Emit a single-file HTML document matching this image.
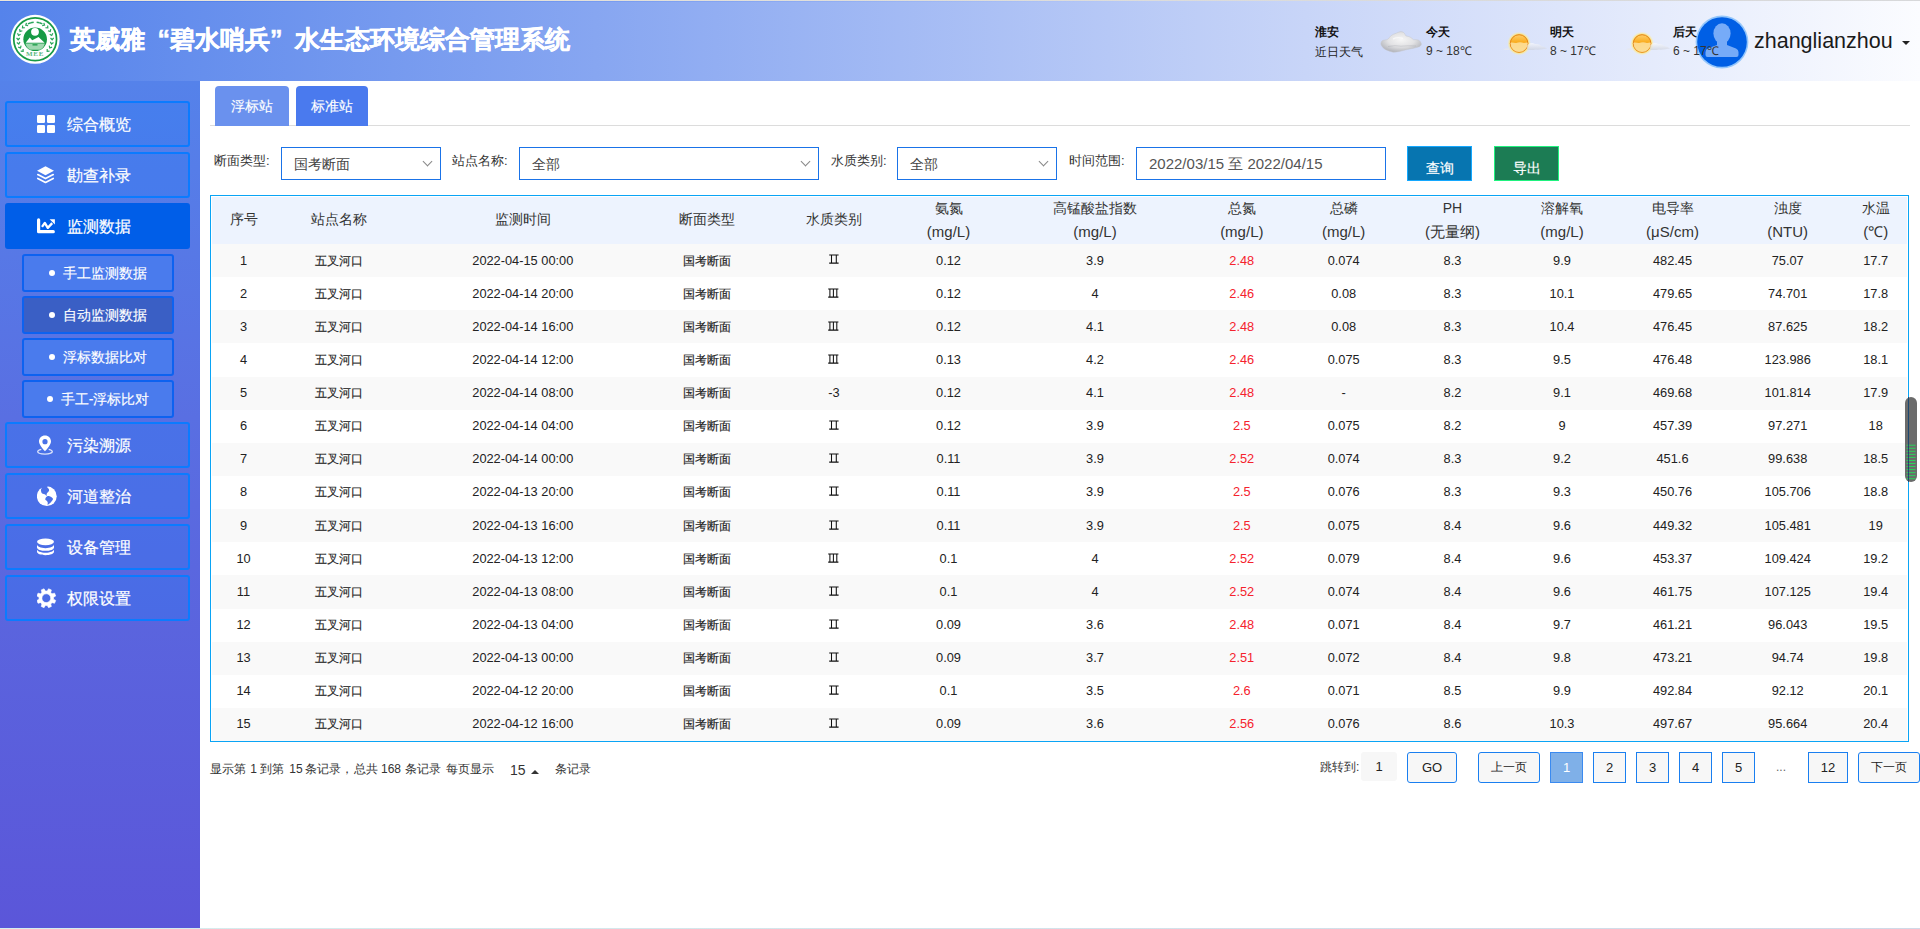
<!DOCTYPE html><html><head><meta charset="utf-8"><title>碧水哨兵</title><style>
*{margin:0;padding:0;box-sizing:border-box}
html,body{width:1920px;height:929px;overflow:hidden;background:#fff;font-family:"Liberation Sans",sans-serif;color:#333}
.abs{position:absolute}
#topline{position:absolute;left:0;top:0;width:1920px;height:1px;background:linear-gradient(90deg,#ebe6d9,#dcdcdb 60%,#d7d8da)}
#header{position:absolute;left:0;top:1px;width:1920px;height:80px;background:linear-gradient(90deg,#5583eb 0%,#87a6f1 31%,#c8d5f8 68%,#fbfcff 100%)}
#header .hl{position:absolute;left:0;top:0;width:1920px;height:1px;background:linear-gradient(90deg,rgba(40,100,235,.35),rgba(255,255,255,0) 60%)}
#title{position:absolute;left:70px;top:23px;font-size:25px;font-weight:bold;color:#fff;white-space:nowrap;letter-spacing:0px;-webkit-text-stroke:0.45px #fff}
#sidebar{position:absolute;left:0;top:81px;width:200px;height:847px;background:linear-gradient(180deg,#5582ea 0%,#5a6ae0 50%,#5b56d9 100%)}
#sidebar .edge{position:absolute;right:0;top:0;width:1px;height:100%;background:rgba(70,60,215,.5)}
.mi{position:absolute;left:5px;width:185px;height:46px;border:2px solid #0b7bff;border-radius:3px;background:rgba(41,120,245,.32);color:#fff;font-size:16px}
.mi.act{background:#005ee8;border-color:#005ee8}
.mi .tx{position:absolute;left:60px;top:12px;line-height:20px;white-space:nowrap;-webkit-text-stroke:0.2px #fff}
.mi svg{position:absolute;left:30px;top:12px}
.si{position:absolute;left:22px;width:152px;height:38px;border:2px solid #0d62f0;border-radius:3px;background:#4a7bed;color:#fff;font-size:14px;text-align:center;line-height:34px;white-space:nowrap;-webkit-text-stroke:0.15px #fff}
.si.act{background:#3a5fc5}
.si .dot{display:inline-block;width:6px;height:6px;border-radius:3px;background:#fff;vertical-align:middle;margin-right:8px;position:relative;top:-1px}
#bottomline{position:absolute;left:0;top:928px;width:1920px;height:1px;background:linear-gradient(90deg,#d6eeee,#d0d9e8)}
.tab{position:absolute;top:86px;height:40px;border-radius:4px 4px 0 0;color:#fff;font-size:14px;text-align:center;line-height:40px;-webkit-text-stroke:0.15px #fff}
#divider{position:absolute;left:210px;top:125px;width:1700px;height:1px;background:#dcdcdc}
.lbl{position:absolute;top:152px;font-size:13px;color:#333;line-height:18px;white-space:nowrap}
.sel{position:absolute;top:147px;height:33px;border:1px solid #1a73e8;background:#fff;font-size:14px;color:#444;line-height:33px;padding-left:12px;white-space:nowrap}
.sel .chev{position:absolute;top:10px;width:7px;height:7px;border-right:1px solid #888;border-bottom:1px solid #888;transform:rotate(45deg)}
.btn{position:absolute;top:146px;width:65px;height:35px;color:#fff;font-size:14px;text-align:center;line-height:33px;padding-top:5px;-webkit-text-stroke:0.2px #fff}
#tbl{position:absolute;left:210px;top:195px;width:1699px;height:547px;border:1px solid #0aa4f5}
#thead{position:absolute;left:1px;top:1px;width:1695px;height:47px;background:#edf3fe}
.row{position:absolute;left:1px;width:1695px;height:33.14px}
.row.odd{background:#f9f9f9}
.c{position:absolute;width:160px;text-align:center;white-space:nowrap}
.hc{font-size:14px;color:#333}
.bc{font-size:12.8px;color:#222;line-height:16px}
.red{color:#f5222d}
.pg{position:absolute;top:752px;height:31px;border:1px solid #1a7ff0;background:#f7f7f7;font-size:13px;color:#222;text-align:center;line-height:29px}
</style></head><body>
<div id="topline"></div><div id="header"><div class="hl"></div></div>
<svg class="abs" style="left:0;top:0" width="70" height="80" viewBox="0 0 70 80">
<circle cx="35.15" cy="39.3" r="24.5" fill="#fff"/>
<circle cx="35.15" cy="39.3" r="21.4" fill="none" stroke="#179a45" stroke-width="1.7"/>
<g fill="#2aa65a"><path d="M20.73 51.08 L23.12 51.34 L23.10 48.94 M18.24 47.09 L20.49 47.95 L21.07 45.61 M16.82 42.61 L18.79 44.00 L19.94 41.89 M16.58 37.91 L18.13 39.75 L19.78 38.00 M17.52 33.31 L18.56 35.48 L20.59 34.19 M19.58 29.08 L20.05 31.45 L22.34 30.71 M22.63 25.51 L22.49 27.92 L24.90 27.77 M26.49 22.82 L25.75 25.11 L28.11 25.57 M49.57 51.08 L47.18 51.34 L47.20 48.94 M52.06 47.09 L49.81 47.95 L49.23 45.61 M53.48 42.61 L51.51 44.00 L50.36 41.89 M53.72 37.91 L52.17 39.75 L50.52 38.00 M52.78 33.31 L51.74 35.48 L49.71 34.19 M50.72 29.08 L50.25 31.45 L47.96 30.71 M47.67 25.51 L47.81 27.92 L45.40 27.77 M43.81 22.82 L44.55 25.11 L42.19 25.57" fill="none" stroke="#2aa65a" stroke-width="1.2"/><rect x="27.84" y="22.58" width="3" height="1.5" transform="rotate(-20.0 29.34 23.33)"/><rect x="30.70" y="21.81" width="3" height="1.5" transform="rotate(-10.0 32.20 22.56)"/><rect x="36.60" y="21.81" width="3" height="1.5" transform="rotate(10.0 38.10 22.56)"/><rect x="39.46" y="22.58" width="3" height="1.5" transform="rotate(20.0 40.96 23.33)"/></g>
<circle cx="35.15" cy="39.3" r="11.8" fill="#179a45"/>
<circle cx="35" cy="31.8" r="3.9" fill="#fff"/>
<path d="M25.7 42.8 L29.8 37.6 L32.2 40.2 L34.2 39.2 L38.5 37 L44.6 42.8 Z" fill="#fff"/>
<path d="M25.4 43.4 H44.9 Q43.5 48 40 49.8 H30.3 Q26.8 48 25.4 43.4 Z" fill="#9fd8b0"/>
<rect x="32.5" y="44.2" width="5" height="1.3" fill="#179a45"/>
<text x="35.1" y="56.4" font-size="7" font-weight="bold" fill="#5cb97f" text-anchor="middle" letter-spacing="0.8" font-family="Liberation Serif">MEE</text>
</svg>
<div id="title">英威雅<span style="display:inline-block;width:25px;text-align:right">“</span>碧水哨兵<span style="display:inline-block;width:25px;text-align:left">”</span>水生态环境综合管理系统</div>
<div class="abs" style="left:1315px;top:25px;font-size:12px;font-weight:bold;color:#111;line-height:14px">淮安</div>
<div class="abs" style="left:1315px;top:45px;font-size:12px;color:#222;line-height:14px">近日天气</div>
<svg class="abs" style="left:1379px;top:30px" width="44" height="24" viewBox="0 0 44 24">
<defs><radialGradient id="cg" cx="50%" cy="40%" r="60%"><stop offset="0" stop-color="#f6f6f6"/><stop offset=".55" stop-color="#e2e2e4"/><stop offset="1" stop-color="#b4b6bc"/></radialGradient></defs>
<path d="M2 14.6 C1.8 12.8 2.2 11.6 2.8 11.2 C3.8 10.4 4.6 10.2 5.4 10.1 C7 10 8.2 9.6 9.2 9 C10.4 7.6 11.2 6.4 12.2 5.6 C13.8 4.4 15.4 3.8 17.1 3.3 C18.8 2.6 20.2 1.7 21.7 1.6 C23.4 1.6 24.6 2.4 25.4 3.3 C26.2 4.4 26.4 5.2 26.9 5.9 C28.6 6.2 30 6.6 31.1 7.1 C32.6 7.9 33.6 9 34.5 9.7 C36.4 9.6 38.2 9.6 39.4 10.1 C41 10.8 42.2 12.6 42.4 14.2 C42 15.8 40.8 16.6 39.4 16.9 C37.4 17.6 35.4 18 33.7 18.4 C31.8 18.8 30 19.2 28.1 19.5 C25.6 20.2 23 20.9 20.5 21.4 C18.4 21.9 16.2 22.3 14.1 22.2 C11.6 21.6 9.2 20.8 7.3 19.9 C5.8 19.2 4.4 18.2 3.5 16.9 C2.8 16.2 2.2 15.4 2 14.6 Z" fill="url(#cg)" stroke="#c4c6cc" stroke-width=".5"/>
<path d="M9 16.5 Q16 15 22 16.2 Q29 15.4 37 16" fill="none" stroke="#a9abb2" stroke-width=".9" opacity=".45"/><path d="M14 9 Q19 6.5 24 8.5" fill="none" stroke="#ffffff" stroke-width="1.4" opacity=".6"/>
</svg>
<div class="abs" style="left:1426px;top:25px;font-size:12px;font-weight:bold;color:#111;line-height:14px">今天</div>
<div class="abs" style="left:1426px;top:44px;font-size:12px;color:#333;line-height:14px">9 ~ 18℃</div>
<svg class="abs" style="left:1502px;top:31px" width="46" height="26" viewBox="0 0 46 26">
<defs><linearGradient id="sg1" x1="0" y1="0" x2="0" y2="1"><stop offset="0" stop-color="#ffcf6a"/><stop offset=".45" stop-color="#f9ab1c"/><stop offset="1" stop-color="#f7b733"/></linearGradient>
<radialGradient id="gl1" cx="50%" cy="50%" r="50%"><stop offset=".74" stop-color="#ffd84a" stop-opacity="1"/><stop offset=".87" stop-color="#ffe98a" stop-opacity=".55"/><stop offset="1" stop-color="#fff3a0" stop-opacity="0"/></radialGradient>
<clipPath id="cp1"><circle cx="17.1" cy="12.5" r="8.6"/></clipPath>
<linearGradient id="cw1" x1="0" y1="0" x2="0" y2="1"><stop offset="0" stop-color="#ffffff"/><stop offset="1" stop-color="#c9ccd6"/></linearGradient></defs>
<circle cx="17.1" cy="12.5" r="11.8" fill="url(#gl1)"/>
<circle cx="17.1" cy="12.5" r="8.8" fill="url(#sg1)" stroke="#e3831c" stroke-width="1"/>
<g clip-path="url(#cp1)"><path d="M6 12 Q10 10.8 14 12 Q18 10.5 22 12 Q25 11 28 12 V22 H6 Z" fill="#fff6d0" opacity=".62"/></g>
<path d="M25 14.5 Q29 10.5 33 13 Q37 12.5 39.5 15 Q43 15.8 45 17.5 Q40 18.8 34 18.6 Q29 19.5 25 18.8 Z" fill="url(#cw1)" opacity=".6"/>
<path d="M1 18.5 Q4 16.5 7 17.8 L7 19 Q4 19.2 1 18.5 Z" fill="#e6e8ee" opacity=".8"/>
</svg>
<div class="abs" style="left:1550px;top:25px;font-size:12px;font-weight:bold;color:#111;line-height:14px">明天</div>
<div class="abs" style="left:1550px;top:44px;font-size:12px;color:#333;line-height:14px">8 ~ 17℃</div>
<svg class="abs" style="left:1625px;top:31px" width="46" height="26" viewBox="0 0 46 26">
<defs><linearGradient id="sg2" x1="0" y1="0" x2="0" y2="1"><stop offset="0" stop-color="#ffcf6a"/><stop offset=".45" stop-color="#f9ab1c"/><stop offset="1" stop-color="#f7b733"/></linearGradient>
<radialGradient id="gl2" cx="50%" cy="50%" r="50%"><stop offset=".74" stop-color="#ffd84a" stop-opacity="1"/><stop offset=".87" stop-color="#ffe98a" stop-opacity=".55"/><stop offset="1" stop-color="#fff3a0" stop-opacity="0"/></radialGradient>
<clipPath id="cp2"><circle cx="17.1" cy="12.5" r="8.6"/></clipPath>
<linearGradient id="cw2" x1="0" y1="0" x2="0" y2="1"><stop offset="0" stop-color="#ffffff"/><stop offset="1" stop-color="#c9ccd6"/></linearGradient></defs>
<circle cx="17.1" cy="12.5" r="11.8" fill="url(#gl2)"/>
<circle cx="17.1" cy="12.5" r="8.8" fill="url(#sg2)" stroke="#e3831c" stroke-width="1"/>
<g clip-path="url(#cp2)"><path d="M6 12 Q10 10.8 14 12 Q18 10.5 22 12 Q25 11 28 12 V22 H6 Z" fill="#fff6d0" opacity=".62"/></g>
<path d="M25 14.5 Q29 10.5 33 13 Q37 12.5 39.5 15 Q43 15.8 45 17.5 Q40 18.8 34 18.6 Q29 19.5 25 18.8 Z" fill="url(#cw2)" opacity=".6"/>
<path d="M1 18.5 Q4 16.5 7 17.8 L7 19 Q4 19.2 1 18.5 Z" fill="#e6e8ee" opacity=".8"/>
</svg>
<svg class="abs" style="left:1695px;top:14px" width="54" height="56" viewBox="0 0 54 56">
<circle cx="27" cy="28" r="26.4" fill="#93c6fb"/>
<circle cx="27" cy="28" r="24.8" fill="#005fe5"/>
<ellipse cx="27" cy="19.5" rx="8.6" ry="10.2" fill="#76abf8"/>
<path d="M22 26 L22 31 L12.5 34.5 Q10.5 35.5 10.5 38.5 L10.5 41 Q10.5 43 12.5 43 L41.5 43 Q43.5 43 43.5 41 L43.5 38 Q43.5 35.5 41 34.5 L32 31 L32 26 Z" fill="#76abf8"/>
</svg>
<div class="abs" style="left:1673px;top:25px;font-size:12px;font-weight:bold;color:#111;line-height:14px">后天</div>
<div class="abs" style="left:1673px;top:44px;font-size:12px;color:#333;line-height:14px">6 ~ 17℃</div>
<div class="abs" style="left:1754px;top:28.5px;font-size:21.5px;color:#1a1a1a;line-height:24px">zhanglianzhou</div>
<div class="abs" style="left:1902px;top:41px;width:0;height:0;border-left:4px solid transparent;border-right:4px solid transparent;border-top:4.5px solid #222"></div>
<div id="sidebar"></div>
<div class="mi" style="top:101px"><svg width="18" height="18" viewBox="0 0 18 18" style="left:30px;top:12px"><rect x="0" y="0" width="8" height="8" rx="1.2" fill="#fff"/><rect x="10" y="0" width="8" height="8" rx="1.2" fill="#fff"/><rect x="0" y="10" width="8" height="8" rx="1.2" fill="#fff"/><rect x="10" y="10" width="8" height="8" rx="1.2" fill="#fff"/></svg><span class="tx">综合概览</span></div>
<div class="mi" style="top:152px"><svg width="18" height="18" viewBox="0 0 18 18" style="left:30px;top:12px"><path d="M8.5 0.3 L17 4.8 L8.5 9.3 L0 4.8 Z" fill="#fff"/><path d="M0.8 8.6 L8.5 12.6 L16.2 8.6" fill="none" stroke="#fff" stroke-width="1.7" stroke-linecap="round" stroke-linejoin="round"/><path d="M0.8 12.4 L8.5 16.4 L16.2 12.4" fill="none" stroke="#fff" stroke-width="1.7" stroke-linecap="round" stroke-linejoin="round"/></svg><span class="tx">勘查补录</span></div>
<div class="mi act" style="top:203px"><svg width="19" height="16" viewBox="0 0 19 16" style="left:30px;top:13px"><path d="M1.6 1.9 V13.7 H16.3" fill="none" stroke="#fff" stroke-width="3.2" stroke-linecap="round" stroke-linejoin="round"/><path d="M5 8.9 L7.8 4.9 L10.8 9.9 L15.2 5.1" fill="none" stroke="#fff" stroke-width="2.3" stroke-linejoin="round"/><path d="M12.6 1.2 L17.9 1.2 L17.9 6.5 Z" fill="#fff"/></svg><span class="tx">监测数据</span></div>
<div class="si" style="top:254px"><span class="dot"></span>手工监测数据</div>
<div class="si act" style="top:296px"><span class="dot"></span>自动监测数据</div>
<div class="si" style="top:338px"><span class="dot"></span>浮标数据比对</div>
<div class="si" style="top:380px"><span class="dot"></span>手工-浮标比对</div>
<div class="mi" style="top:422px"><svg width="18" height="20" viewBox="0 0 18 20" style="left:30px;top:11px"><path d="M8 0.5 C11.5 0.5 14 3.1 14 6.5 C14 10.3 8 16.2 8 16.2 C8 16.2 2 10.3 2 6.5 C2 3.1 4.5 0.5 8 0.5 Z M8 4.1 A2.6 2.6 0 1 0 8 9.3 A2.6 2.6 0 1 0 8 4.1 Z" fill="#fff" fill-rule="evenodd"/><path d="M4.3 14.4 C1.6 15 0.7 15.8 0.7 16.6 C0.7 18 4 19.1 8 19.1 C12 19.1 15.3 18 15.3 16.6 C15.3 15.8 14.4 15 11.7 14.4" fill="none" stroke="#fff" stroke-opacity=".8" stroke-width="1.3"/></svg><span class="tx">污染溯源</span></div>
<div class="mi" style="top:473px"><svg width="21" height="21" viewBox="0 0 21 21" style="left:30px;top:11px"><defs><mask id="gmask"><circle cx="9.8" cy="10.2" r="9.9" fill="#fff"/><path fill="#000" d="M4.9 1.7 C4.1 2.6 3.8 3.8 4 4.8 C4.2 6.2 4.5 6.9 5.2 7.4 C6.2 8 7.2 8 7.9 8.3 C8.6 8.6 8.9 9.2 9.3 9.9 L9.6 9.8 C9.5 8.6 9.6 7.6 10.3 6.8 C11.2 5.8 12.1 5.3 12.1 4.2 C12.1 3.1 11.6 2.6 10.8 2.1 C10.3 1.8 10.2 1 10.6 0.35 L10.6 -1 L3.5 -1 Z M8.2 13.3 C8.6 12 9 10.9 9.9 10.5 C10.8 10.1 11.7 10 12.5 10.2 C13.7 10.6 14.9 11.3 15.7 12.2 C16.1 12.8 16 13.4 15.6 14 C14.9 15 14 16 13.4 16.8 C12.5 17.7 11.4 18.4 10.5 18.9 C10.6 18 10.9 17.2 10.7 16.4 C10.5 15.4 9.8 15 9.3 14.5 C8.8 14.1 8.3 13.8 8.2 13.3 Z"/></mask></defs><rect x="0" y="0" width="21" height="21" fill="#fff" mask="url(#gmask)"/></svg><span class="tx">河道整治</span></div>
<div class="mi" style="top:524px"><svg width="18" height="18" viewBox="0 0 18 18" style="left:30px;top:12px"><ellipse cx="8.5" cy="3.8" rx="8.5" ry="3.4" fill="#fff"/><path d="M0 6.6 C0 8.5 3.8 10.2 8.5 10.2 C13.2 10.2 17 8.5 17 6.6 V9.4 C17 11.3 13.2 12.8 8.5 12.8 C3.8 12.8 0 11.3 0 9.4 Z" fill="#fff"/><path d="M0 11.2 C0 13 3.8 14.7 8.5 14.7 C13.2 14.7 17 13 17 11.2 V13.8 C17 15.7 13.2 17.2 8.5 17.2 C3.8 17.2 0 15.7 0 13.8 Z" fill="#fff"/></svg><span class="tx">设备管理</span></div>
<div class="mi" style="top:575px"><svg width="20" height="21" viewBox="0 0 20 21" style="left:30px;top:11px"><path fill="#fff" fill-rule="evenodd" stroke="#fff" stroke-width="0.6" stroke-linejoin="round" d="M16.54 11.15 L18.73 12.46 L17.57 15.27 L15.09 14.64 L13.74 15.99 L14.37 18.47 L11.56 19.63 L10.25 17.44 L8.35 17.44 L7.04 19.63 L4.23 18.47 L4.86 15.99 L3.51 14.64 L1.03 15.27 L-0.13 12.46 L2.06 11.15 L2.06 9.25 L-0.13 7.94 L1.03 5.13 L3.51 5.76 L4.86 4.41 L4.23 1.93 L7.04 0.77 L8.35 2.96 L10.25 2.96 L11.56 0.77 L14.37 1.93 L13.74 4.41 L15.09 5.76 L17.57 5.13 L18.73 7.94 L16.54 9.25 Z M9.3 5.799999999999999 A4.4 4.4 0 1 0 9.3 14.6 A4.4 4.4 0 1 0 9.3 5.799999999999999 Z"/></svg><span class="tx">权限设置</span></div>
<div id="bottomline"></div>
<div id="divider"></div>
<div class="tab" style="left:215px;width:74px;background:#6a91ee">浮标站</div>
<div class="tab" style="left:296px;width:72px;background:#4a7aee">标准站</div>
<div class="lbl" style="left:214px">断面类型:</div>
<div class="sel" style="left:281px;width:160px">国考断面<span class="chev" style="left:142px"></span></div>
<div class="lbl" style="left:452px">站点名称:</div>
<div class="sel" style="left:519px;width:300px">全部<span class="chev" style="left:282px"></span></div>
<div class="lbl" style="left:831px">水质类别:</div>
<div class="sel" style="left:897px;width:160px">全部<span class="chev" style="left:142px"></span></div>
<div class="lbl" style="left:1069px">时间范围:</div>
<div class="sel" style="left:1136px;width:250px;font-size:15px;color:#555;line-height:31px">2022/03/15 至 2022/04/15</div>
<div class="btn" style="left:1407px;background:#0775b0;border:1px solid #14a8ff">查询</div>
<div class="btn" style="left:1494px;background:#1c7c54;border:1px solid #1ff27e">导出</div>
<div id="tbl"><div id="thead">
<div class="c hc" style="left:-48.5px;top:13px;line-height:18px">序号</div>
<div class="c hc" style="left:47.3px;top:13px;line-height:18px">站点名称</div>
<div class="c hc" style="left:230.8px;top:13px;line-height:18px">监测时间</div>
<div class="c hc" style="left:414.7px;top:13px;line-height:18px">断面类型</div>
<div class="c hc" style="left:542.0px;top:13px;line-height:18px">水质类别</div>
<div class="c hc" style="left:656.5px;top:0px;line-height:23px">氨氮<br><span style="font-size:15px">(mg/L)</span></div>
<div class="c hc" style="left:803.0px;top:0px;line-height:23px">高锰酸盐指数<br><span style="font-size:15px">(mg/L)</span></div>
<div class="c hc" style="left:949.8px;top:0px;line-height:23px">总氮<br><span style="font-size:15px">(mg/L)</span></div>
<div class="c hc" style="left:1051.7px;top:0px;line-height:23px">总磷<br><span style="font-size:15px">(mg/L)</span></div>
<div class="c hc" style="left:1160.5px;top:0px;line-height:23px">PH<br><span style="font-size:15px">(无量纲)</span></div>
<div class="c hc" style="left:1270.0px;top:0px;line-height:23px">溶解氧<br><span style="font-size:15px">(mg/L)</span></div>
<div class="c hc" style="left:1380.5px;top:0px;line-height:23px">电导率<br><span style="font-size:15px">(μS/cm)</span></div>
<div class="c hc" style="left:1495.7px;top:0px;line-height:23px">浊度<br><span style="font-size:15px">(NTU)</span></div>
<div class="c hc" style="left:1583.7px;top:0px;line-height:23px">水温<br><span style="font-size:15px">(℃)</span></div>
</div>
<div class="row odd" style="top:48.00px">
<div class="c bc" style="left:-48.5px;top:8.5px">1</div>
<div class="c bc" style="left:47.3px;top:8.5px"><span style="font-size:12px;-webkit-text-stroke:0.15px #222">五叉河口</span></div>
<div class="c bc" style="left:230.8px;top:8.5px">2022-04-15 00:00</div>
<div class="c bc" style="left:414.7px;top:8.5px"><span style="font-size:12px;-webkit-text-stroke:0.15px #222">国考断面</span></div>
<svg class="abs" style="left:616.9px;top:10.4px" width="10" height="10" viewBox="0 0 10 10"><path d="M0.2 0.9 H9.6 M0.2 9.1 H9.6 M2.5 0.9 V9.1 M7.3 0.9 V9.1" stroke="#111" stroke-width="1.05" fill="none"/></svg>
<div class="c bc" style="left:656.5px;top:8.5px">0.12</div>
<div class="c bc" style="left:803.0px;top:8.5px">3.9</div>
<div class="c bc red" style="left:949.8px;top:8.5px">2.48</div>
<div class="c bc" style="left:1051.7px;top:8.5px">0.074</div>
<div class="c bc" style="left:1160.5px;top:8.5px">8.3</div>
<div class="c bc" style="left:1270.0px;top:8.5px">9.9</div>
<div class="c bc" style="left:1380.5px;top:8.5px">482.45</div>
<div class="c bc" style="left:1495.7px;top:8.5px">75.07</div>
<div class="c bc" style="left:1583.7px;top:8.5px">17.7</div>
</div>
<div class="row" style="top:81.14px">
<div class="c bc" style="left:-48.5px;top:8.5px">2</div>
<div class="c bc" style="left:47.3px;top:8.5px"><span style="font-size:12px;-webkit-text-stroke:0.15px #222">五叉河口</span></div>
<div class="c bc" style="left:230.8px;top:8.5px">2022-04-14 20:00</div>
<div class="c bc" style="left:414.7px;top:8.5px"><span style="font-size:12px;-webkit-text-stroke:0.15px #222">国考断面</span></div>
<svg class="abs" style="left:616.4px;top:10.4px" width="11" height="10" viewBox="0 0 11 10"><path d="M0.2 0.9 H10.4 M0.2 9.1 H10.4 M1.9 0.9 V9.1 M5.4 0.9 V9.1 M8.8 0.9 V9.1" stroke="#111" stroke-width="1.05" fill="none"/></svg>
<div class="c bc" style="left:656.5px;top:8.5px">0.12</div>
<div class="c bc" style="left:803.0px;top:8.5px">4</div>
<div class="c bc red" style="left:949.8px;top:8.5px">2.46</div>
<div class="c bc" style="left:1051.7px;top:8.5px">0.08</div>
<div class="c bc" style="left:1160.5px;top:8.5px">8.3</div>
<div class="c bc" style="left:1270.0px;top:8.5px">10.1</div>
<div class="c bc" style="left:1380.5px;top:8.5px">479.65</div>
<div class="c bc" style="left:1495.7px;top:8.5px">74.701</div>
<div class="c bc" style="left:1583.7px;top:8.5px">17.8</div>
</div>
<div class="row odd" style="top:114.28px">
<div class="c bc" style="left:-48.5px;top:8.5px">3</div>
<div class="c bc" style="left:47.3px;top:8.5px"><span style="font-size:12px;-webkit-text-stroke:0.15px #222">五叉河口</span></div>
<div class="c bc" style="left:230.8px;top:8.5px">2022-04-14 16:00</div>
<div class="c bc" style="left:414.7px;top:8.5px"><span style="font-size:12px;-webkit-text-stroke:0.15px #222">国考断面</span></div>
<svg class="abs" style="left:616.4px;top:10.4px" width="11" height="10" viewBox="0 0 11 10"><path d="M0.2 0.9 H10.4 M0.2 9.1 H10.4 M1.9 0.9 V9.1 M5.4 0.9 V9.1 M8.8 0.9 V9.1" stroke="#111" stroke-width="1.05" fill="none"/></svg>
<div class="c bc" style="left:656.5px;top:8.5px">0.12</div>
<div class="c bc" style="left:803.0px;top:8.5px">4.1</div>
<div class="c bc red" style="left:949.8px;top:8.5px">2.48</div>
<div class="c bc" style="left:1051.7px;top:8.5px">0.08</div>
<div class="c bc" style="left:1160.5px;top:8.5px">8.3</div>
<div class="c bc" style="left:1270.0px;top:8.5px">10.4</div>
<div class="c bc" style="left:1380.5px;top:8.5px">476.45</div>
<div class="c bc" style="left:1495.7px;top:8.5px">87.625</div>
<div class="c bc" style="left:1583.7px;top:8.5px">18.2</div>
</div>
<div class="row" style="top:147.42px">
<div class="c bc" style="left:-48.5px;top:8.5px">4</div>
<div class="c bc" style="left:47.3px;top:8.5px"><span style="font-size:12px;-webkit-text-stroke:0.15px #222">五叉河口</span></div>
<div class="c bc" style="left:230.8px;top:8.5px">2022-04-14 12:00</div>
<div class="c bc" style="left:414.7px;top:8.5px"><span style="font-size:12px;-webkit-text-stroke:0.15px #222">国考断面</span></div>
<svg class="abs" style="left:616.4px;top:10.4px" width="11" height="10" viewBox="0 0 11 10"><path d="M0.2 0.9 H10.4 M0.2 9.1 H10.4 M1.9 0.9 V9.1 M5.4 0.9 V9.1 M8.8 0.9 V9.1" stroke="#111" stroke-width="1.05" fill="none"/></svg>
<div class="c bc" style="left:656.5px;top:8.5px">0.13</div>
<div class="c bc" style="left:803.0px;top:8.5px">4.2</div>
<div class="c bc red" style="left:949.8px;top:8.5px">2.46</div>
<div class="c bc" style="left:1051.7px;top:8.5px">0.075</div>
<div class="c bc" style="left:1160.5px;top:8.5px">8.3</div>
<div class="c bc" style="left:1270.0px;top:8.5px">9.5</div>
<div class="c bc" style="left:1380.5px;top:8.5px">476.48</div>
<div class="c bc" style="left:1495.7px;top:8.5px">123.986</div>
<div class="c bc" style="left:1583.7px;top:8.5px">18.1</div>
</div>
<div class="row odd" style="top:180.56px">
<div class="c bc" style="left:-48.5px;top:8.5px">5</div>
<div class="c bc" style="left:47.3px;top:8.5px"><span style="font-size:12px;-webkit-text-stroke:0.15px #222">五叉河口</span></div>
<div class="c bc" style="left:230.8px;top:8.5px">2022-04-14 08:00</div>
<div class="c bc" style="left:414.7px;top:8.5px"><span style="font-size:12px;-webkit-text-stroke:0.15px #222">国考断面</span></div>
<div class="c bc" style="left:542.0px;top:8.5px">-3</div>
<div class="c bc" style="left:656.5px;top:8.5px">0.12</div>
<div class="c bc" style="left:803.0px;top:8.5px">4.1</div>
<div class="c bc red" style="left:949.8px;top:8.5px">2.48</div>
<div class="c bc" style="left:1051.7px;top:8.5px">-</div>
<div class="c bc" style="left:1160.5px;top:8.5px">8.2</div>
<div class="c bc" style="left:1270.0px;top:8.5px">9.1</div>
<div class="c bc" style="left:1380.5px;top:8.5px">469.68</div>
<div class="c bc" style="left:1495.7px;top:8.5px">101.814</div>
<div class="c bc" style="left:1583.7px;top:8.5px">17.9</div>
</div>
<div class="row" style="top:213.70px">
<div class="c bc" style="left:-48.5px;top:8.5px">6</div>
<div class="c bc" style="left:47.3px;top:8.5px"><span style="font-size:12px;-webkit-text-stroke:0.15px #222">五叉河口</span></div>
<div class="c bc" style="left:230.8px;top:8.5px">2022-04-14 04:00</div>
<div class="c bc" style="left:414.7px;top:8.5px"><span style="font-size:12px;-webkit-text-stroke:0.15px #222">国考断面</span></div>
<svg class="abs" style="left:616.9px;top:10.4px" width="10" height="10" viewBox="0 0 10 10"><path d="M0.2 0.9 H9.6 M0.2 9.1 H9.6 M2.5 0.9 V9.1 M7.3 0.9 V9.1" stroke="#111" stroke-width="1.05" fill="none"/></svg>
<div class="c bc" style="left:656.5px;top:8.5px">0.12</div>
<div class="c bc" style="left:803.0px;top:8.5px">3.9</div>
<div class="c bc red" style="left:949.8px;top:8.5px">2.5</div>
<div class="c bc" style="left:1051.7px;top:8.5px">0.075</div>
<div class="c bc" style="left:1160.5px;top:8.5px">8.2</div>
<div class="c bc" style="left:1270.0px;top:8.5px">9</div>
<div class="c bc" style="left:1380.5px;top:8.5px">457.39</div>
<div class="c bc" style="left:1495.7px;top:8.5px">97.271</div>
<div class="c bc" style="left:1583.7px;top:8.5px">18</div>
</div>
<div class="row odd" style="top:246.84px">
<div class="c bc" style="left:-48.5px;top:8.5px">7</div>
<div class="c bc" style="left:47.3px;top:8.5px"><span style="font-size:12px;-webkit-text-stroke:0.15px #222">五叉河口</span></div>
<div class="c bc" style="left:230.8px;top:8.5px">2022-04-14 00:00</div>
<div class="c bc" style="left:414.7px;top:8.5px"><span style="font-size:12px;-webkit-text-stroke:0.15px #222">国考断面</span></div>
<svg class="abs" style="left:616.9px;top:10.4px" width="10" height="10" viewBox="0 0 10 10"><path d="M0.2 0.9 H9.6 M0.2 9.1 H9.6 M2.5 0.9 V9.1 M7.3 0.9 V9.1" stroke="#111" stroke-width="1.05" fill="none"/></svg>
<div class="c bc" style="left:656.5px;top:8.5px">0.11</div>
<div class="c bc" style="left:803.0px;top:8.5px">3.9</div>
<div class="c bc red" style="left:949.8px;top:8.5px">2.52</div>
<div class="c bc" style="left:1051.7px;top:8.5px">0.074</div>
<div class="c bc" style="left:1160.5px;top:8.5px">8.3</div>
<div class="c bc" style="left:1270.0px;top:8.5px">9.2</div>
<div class="c bc" style="left:1380.5px;top:8.5px">451.6</div>
<div class="c bc" style="left:1495.7px;top:8.5px">99.638</div>
<div class="c bc" style="left:1583.7px;top:8.5px">18.5</div>
</div>
<div class="row" style="top:279.98px">
<div class="c bc" style="left:-48.5px;top:8.5px">8</div>
<div class="c bc" style="left:47.3px;top:8.5px"><span style="font-size:12px;-webkit-text-stroke:0.15px #222">五叉河口</span></div>
<div class="c bc" style="left:230.8px;top:8.5px">2022-04-13 20:00</div>
<div class="c bc" style="left:414.7px;top:8.5px"><span style="font-size:12px;-webkit-text-stroke:0.15px #222">国考断面</span></div>
<svg class="abs" style="left:616.9px;top:10.4px" width="10" height="10" viewBox="0 0 10 10"><path d="M0.2 0.9 H9.6 M0.2 9.1 H9.6 M2.5 0.9 V9.1 M7.3 0.9 V9.1" stroke="#111" stroke-width="1.05" fill="none"/></svg>
<div class="c bc" style="left:656.5px;top:8.5px">0.11</div>
<div class="c bc" style="left:803.0px;top:8.5px">3.9</div>
<div class="c bc red" style="left:949.8px;top:8.5px">2.5</div>
<div class="c bc" style="left:1051.7px;top:8.5px">0.076</div>
<div class="c bc" style="left:1160.5px;top:8.5px">8.3</div>
<div class="c bc" style="left:1270.0px;top:8.5px">9.3</div>
<div class="c bc" style="left:1380.5px;top:8.5px">450.76</div>
<div class="c bc" style="left:1495.7px;top:8.5px">105.706</div>
<div class="c bc" style="left:1583.7px;top:8.5px">18.8</div>
</div>
<div class="row odd" style="top:313.12px">
<div class="c bc" style="left:-48.5px;top:8.5px">9</div>
<div class="c bc" style="left:47.3px;top:8.5px"><span style="font-size:12px;-webkit-text-stroke:0.15px #222">五叉河口</span></div>
<div class="c bc" style="left:230.8px;top:8.5px">2022-04-13 16:00</div>
<div class="c bc" style="left:414.7px;top:8.5px"><span style="font-size:12px;-webkit-text-stroke:0.15px #222">国考断面</span></div>
<svg class="abs" style="left:616.9px;top:10.4px" width="10" height="10" viewBox="0 0 10 10"><path d="M0.2 0.9 H9.6 M0.2 9.1 H9.6 M2.5 0.9 V9.1 M7.3 0.9 V9.1" stroke="#111" stroke-width="1.05" fill="none"/></svg>
<div class="c bc" style="left:656.5px;top:8.5px">0.11</div>
<div class="c bc" style="left:803.0px;top:8.5px">3.9</div>
<div class="c bc red" style="left:949.8px;top:8.5px">2.5</div>
<div class="c bc" style="left:1051.7px;top:8.5px">0.075</div>
<div class="c bc" style="left:1160.5px;top:8.5px">8.4</div>
<div class="c bc" style="left:1270.0px;top:8.5px">9.6</div>
<div class="c bc" style="left:1380.5px;top:8.5px">449.32</div>
<div class="c bc" style="left:1495.7px;top:8.5px">105.481</div>
<div class="c bc" style="left:1583.7px;top:8.5px">19</div>
</div>
<div class="row" style="top:346.26px">
<div class="c bc" style="left:-48.5px;top:8.5px">10</div>
<div class="c bc" style="left:47.3px;top:8.5px"><span style="font-size:12px;-webkit-text-stroke:0.15px #222">五叉河口</span></div>
<div class="c bc" style="left:230.8px;top:8.5px">2022-04-13 12:00</div>
<div class="c bc" style="left:414.7px;top:8.5px"><span style="font-size:12px;-webkit-text-stroke:0.15px #222">国考断面</span></div>
<svg class="abs" style="left:616.4px;top:10.4px" width="11" height="10" viewBox="0 0 11 10"><path d="M0.2 0.9 H10.4 M0.2 9.1 H10.4 M1.9 0.9 V9.1 M5.4 0.9 V9.1 M8.8 0.9 V9.1" stroke="#111" stroke-width="1.05" fill="none"/></svg>
<div class="c bc" style="left:656.5px;top:8.5px">0.1</div>
<div class="c bc" style="left:803.0px;top:8.5px">4</div>
<div class="c bc red" style="left:949.8px;top:8.5px">2.52</div>
<div class="c bc" style="left:1051.7px;top:8.5px">0.079</div>
<div class="c bc" style="left:1160.5px;top:8.5px">8.4</div>
<div class="c bc" style="left:1270.0px;top:8.5px">9.6</div>
<div class="c bc" style="left:1380.5px;top:8.5px">453.37</div>
<div class="c bc" style="left:1495.7px;top:8.5px">109.424</div>
<div class="c bc" style="left:1583.7px;top:8.5px">19.2</div>
</div>
<div class="row odd" style="top:379.40px">
<div class="c bc" style="left:-48.5px;top:8.5px">11</div>
<div class="c bc" style="left:47.3px;top:8.5px"><span style="font-size:12px;-webkit-text-stroke:0.15px #222">五叉河口</span></div>
<div class="c bc" style="left:230.8px;top:8.5px">2022-04-13 08:00</div>
<div class="c bc" style="left:414.7px;top:8.5px"><span style="font-size:12px;-webkit-text-stroke:0.15px #222">国考断面</span></div>
<svg class="abs" style="left:616.9px;top:10.4px" width="10" height="10" viewBox="0 0 10 10"><path d="M0.2 0.9 H9.6 M0.2 9.1 H9.6 M2.5 0.9 V9.1 M7.3 0.9 V9.1" stroke="#111" stroke-width="1.05" fill="none"/></svg>
<div class="c bc" style="left:656.5px;top:8.5px">0.1</div>
<div class="c bc" style="left:803.0px;top:8.5px">4</div>
<div class="c bc red" style="left:949.8px;top:8.5px">2.52</div>
<div class="c bc" style="left:1051.7px;top:8.5px">0.074</div>
<div class="c bc" style="left:1160.5px;top:8.5px">8.4</div>
<div class="c bc" style="left:1270.0px;top:8.5px">9.6</div>
<div class="c bc" style="left:1380.5px;top:8.5px">461.75</div>
<div class="c bc" style="left:1495.7px;top:8.5px">107.125</div>
<div class="c bc" style="left:1583.7px;top:8.5px">19.4</div>
</div>
<div class="row" style="top:412.54px">
<div class="c bc" style="left:-48.5px;top:8.5px">12</div>
<div class="c bc" style="left:47.3px;top:8.5px"><span style="font-size:12px;-webkit-text-stroke:0.15px #222">五叉河口</span></div>
<div class="c bc" style="left:230.8px;top:8.5px">2022-04-13 04:00</div>
<div class="c bc" style="left:414.7px;top:8.5px"><span style="font-size:12px;-webkit-text-stroke:0.15px #222">国考断面</span></div>
<svg class="abs" style="left:616.9px;top:10.4px" width="10" height="10" viewBox="0 0 10 10"><path d="M0.2 0.9 H9.6 M0.2 9.1 H9.6 M2.5 0.9 V9.1 M7.3 0.9 V9.1" stroke="#111" stroke-width="1.05" fill="none"/></svg>
<div class="c bc" style="left:656.5px;top:8.5px">0.09</div>
<div class="c bc" style="left:803.0px;top:8.5px">3.6</div>
<div class="c bc red" style="left:949.8px;top:8.5px">2.48</div>
<div class="c bc" style="left:1051.7px;top:8.5px">0.071</div>
<div class="c bc" style="left:1160.5px;top:8.5px">8.4</div>
<div class="c bc" style="left:1270.0px;top:8.5px">9.7</div>
<div class="c bc" style="left:1380.5px;top:8.5px">461.21</div>
<div class="c bc" style="left:1495.7px;top:8.5px">96.043</div>
<div class="c bc" style="left:1583.7px;top:8.5px">19.5</div>
</div>
<div class="row odd" style="top:445.68px">
<div class="c bc" style="left:-48.5px;top:8.5px">13</div>
<div class="c bc" style="left:47.3px;top:8.5px"><span style="font-size:12px;-webkit-text-stroke:0.15px #222">五叉河口</span></div>
<div class="c bc" style="left:230.8px;top:8.5px">2022-04-13 00:00</div>
<div class="c bc" style="left:414.7px;top:8.5px"><span style="font-size:12px;-webkit-text-stroke:0.15px #222">国考断面</span></div>
<svg class="abs" style="left:616.9px;top:10.4px" width="10" height="10" viewBox="0 0 10 10"><path d="M0.2 0.9 H9.6 M0.2 9.1 H9.6 M2.5 0.9 V9.1 M7.3 0.9 V9.1" stroke="#111" stroke-width="1.05" fill="none"/></svg>
<div class="c bc" style="left:656.5px;top:8.5px">0.09</div>
<div class="c bc" style="left:803.0px;top:8.5px">3.7</div>
<div class="c bc red" style="left:949.8px;top:8.5px">2.51</div>
<div class="c bc" style="left:1051.7px;top:8.5px">0.072</div>
<div class="c bc" style="left:1160.5px;top:8.5px">8.4</div>
<div class="c bc" style="left:1270.0px;top:8.5px">9.8</div>
<div class="c bc" style="left:1380.5px;top:8.5px">473.21</div>
<div class="c bc" style="left:1495.7px;top:8.5px">94.74</div>
<div class="c bc" style="left:1583.7px;top:8.5px">19.8</div>
</div>
<div class="row" style="top:478.82px">
<div class="c bc" style="left:-48.5px;top:8.5px">14</div>
<div class="c bc" style="left:47.3px;top:8.5px"><span style="font-size:12px;-webkit-text-stroke:0.15px #222">五叉河口</span></div>
<div class="c bc" style="left:230.8px;top:8.5px">2022-04-12 20:00</div>
<div class="c bc" style="left:414.7px;top:8.5px"><span style="font-size:12px;-webkit-text-stroke:0.15px #222">国考断面</span></div>
<svg class="abs" style="left:616.9px;top:10.4px" width="10" height="10" viewBox="0 0 10 10"><path d="M0.2 0.9 H9.6 M0.2 9.1 H9.6 M2.5 0.9 V9.1 M7.3 0.9 V9.1" stroke="#111" stroke-width="1.05" fill="none"/></svg>
<div class="c bc" style="left:656.5px;top:8.5px">0.1</div>
<div class="c bc" style="left:803.0px;top:8.5px">3.5</div>
<div class="c bc red" style="left:949.8px;top:8.5px">2.6</div>
<div class="c bc" style="left:1051.7px;top:8.5px">0.071</div>
<div class="c bc" style="left:1160.5px;top:8.5px">8.5</div>
<div class="c bc" style="left:1270.0px;top:8.5px">9.9</div>
<div class="c bc" style="left:1380.5px;top:8.5px">492.84</div>
<div class="c bc" style="left:1495.7px;top:8.5px">92.12</div>
<div class="c bc" style="left:1583.7px;top:8.5px">20.1</div>
</div>
<div class="row odd" style="top:511.96px">
<div class="c bc" style="left:-48.5px;top:8.5px">15</div>
<div class="c bc" style="left:47.3px;top:8.5px"><span style="font-size:12px;-webkit-text-stroke:0.15px #222">五叉河口</span></div>
<div class="c bc" style="left:230.8px;top:8.5px">2022-04-12 16:00</div>
<div class="c bc" style="left:414.7px;top:8.5px"><span style="font-size:12px;-webkit-text-stroke:0.15px #222">国考断面</span></div>
<svg class="abs" style="left:616.9px;top:10.4px" width="10" height="10" viewBox="0 0 10 10"><path d="M0.2 0.9 H9.6 M0.2 9.1 H9.6 M2.5 0.9 V9.1 M7.3 0.9 V9.1" stroke="#111" stroke-width="1.05" fill="none"/></svg>
<div class="c bc" style="left:656.5px;top:8.5px">0.09</div>
<div class="c bc" style="left:803.0px;top:8.5px">3.6</div>
<div class="c bc red" style="left:949.8px;top:8.5px">2.56</div>
<div class="c bc" style="left:1051.7px;top:8.5px">0.076</div>
<div class="c bc" style="left:1160.5px;top:8.5px">8.6</div>
<div class="c bc" style="left:1270.0px;top:8.5px">10.3</div>
<div class="c bc" style="left:1380.5px;top:8.5px">497.67</div>
<div class="c bc" style="left:1495.7px;top:8.5px">95.664</div>
<div class="c bc" style="left:1583.7px;top:8.5px">20.4</div>
</div>
</div>
<svg class="abs" style="left:1904px;top:396px" width="14" height="87" viewBox="0 0 14 87">
<rect x="1" y="1" width="12" height="85" rx="6" fill="#6b6b6b"/>
<g stroke="#2bd65a" stroke-width="1"><line x1="2.5" y1="49.20" x2="11.5" y2="49.20"/><line x1="2.5" y1="52.25" x2="11.5" y2="52.25"/><line x1="2.5" y1="55.30" x2="11.5" y2="55.30"/><line x1="2.5" y1="58.35" x2="11.5" y2="58.35"/><line x1="2.5" y1="61.40" x2="11.5" y2="61.40"/><line x1="2.5" y1="64.45" x2="11.5" y2="64.45"/><line x1="2.5" y1="67.50" x2="11.5" y2="67.50"/><line x1="2.5" y1="70.55" x2="11.5" y2="70.55"/><line x1="2.5" y1="73.60" x2="11.5" y2="73.60"/><line x1="2.5" y1="76.65" x2="11.5" y2="76.65"/><line x1="2.5" y1="79.70" x2="11.5" y2="79.70"/><line x1="2.5" y1="82.75" x2="11.5" y2="82.75"/></g>
<line x1="4.5" y1="1" x2="4.5" y2="86" stroke="#1d4870" stroke-width="1"/>
</svg>
<div class="abs" style="left:209.7px;top:761px;font-size:12px;color:#333;line-height:16px;white-space:nowrap">显示第</div>
<div class="abs" style="left:250.2px;top:761px;font-size:12px;color:#333;line-height:16px;white-space:nowrap">1</div>
<div class="abs" style="left:260.2px;top:761px;font-size:12px;color:#333;line-height:16px;white-space:nowrap">到第</div>
<div class="abs" style="left:289.3px;top:761px;font-size:12px;color:#333;line-height:16px;white-space:nowrap">15</div>
<div class="abs" style="left:305px;top:761px;font-size:12px;color:#333;line-height:16px;white-space:nowrap">条记录，</div>
<div class="abs" style="left:353.5px;top:761px;font-size:12px;color:#333;line-height:16px;white-space:nowrap">总共</div>
<div class="abs" style="left:381px;top:761px;font-size:12px;color:#333;line-height:16px;white-space:nowrap">168</div>
<div class="abs" style="left:405.2px;top:761px;font-size:12px;color:#333;line-height:16px;white-space:nowrap">条记录</div>
<div class="abs" style="left:446.4px;top:761px;font-size:12px;color:#333;line-height:16px;white-space:nowrap">每页显示</div>
<div class="abs" style="left:510px;top:761px;font-size:14px;color:#333;line-height:18px">15</div>
<div class="abs" style="left:531px;top:770px;width:0;height:0;border-left:4px solid transparent;border-right:4px solid transparent;border-bottom:4px solid #333"></div>
<div class="abs" style="left:555px;top:761px;font-size:12px;color:#333;line-height:16px">条记录</div>
<div class="abs" style="left:1320px;top:759px;font-size:12px;color:#333;line-height:16px">跳转到:</div>
<div class="abs" style="left:1361px;top:752px;width:36px;height:29px;border-radius:3px;background:#f7f7f7;font-size:13px;color:#222;text-align:center;line-height:29px">1</div>
<div class="pg" style="left:1407px;width:50px;border-radius:3px">GO</div>
<div class="pg" style="left:1478px;width:62px;border-radius:3px;font-size:12px">上一页</div>
<div class="pg" style="left:1550px;width:33px;background:#7fb0e8;border-color:#3a8af0;color:#fff">1</div>
<div class="pg" style="left:1593px;width:33px">2</div>
<div class="pg" style="left:1636px;width:33px">3</div>
<div class="pg" style="left:1679px;width:33px">4</div>
<div class="pg" style="left:1722px;width:33px">5</div>
<div class="abs" style="left:1776px;top:759px;font-size:12px;color:#666;line-height:16px">...</div>
<div class="pg" style="left:1808px;width:40px">12</div>
<div class="pg" style="left:1858px;width:62px;border-radius:3px;font-size:12px">下一页</div>
</body></html>
